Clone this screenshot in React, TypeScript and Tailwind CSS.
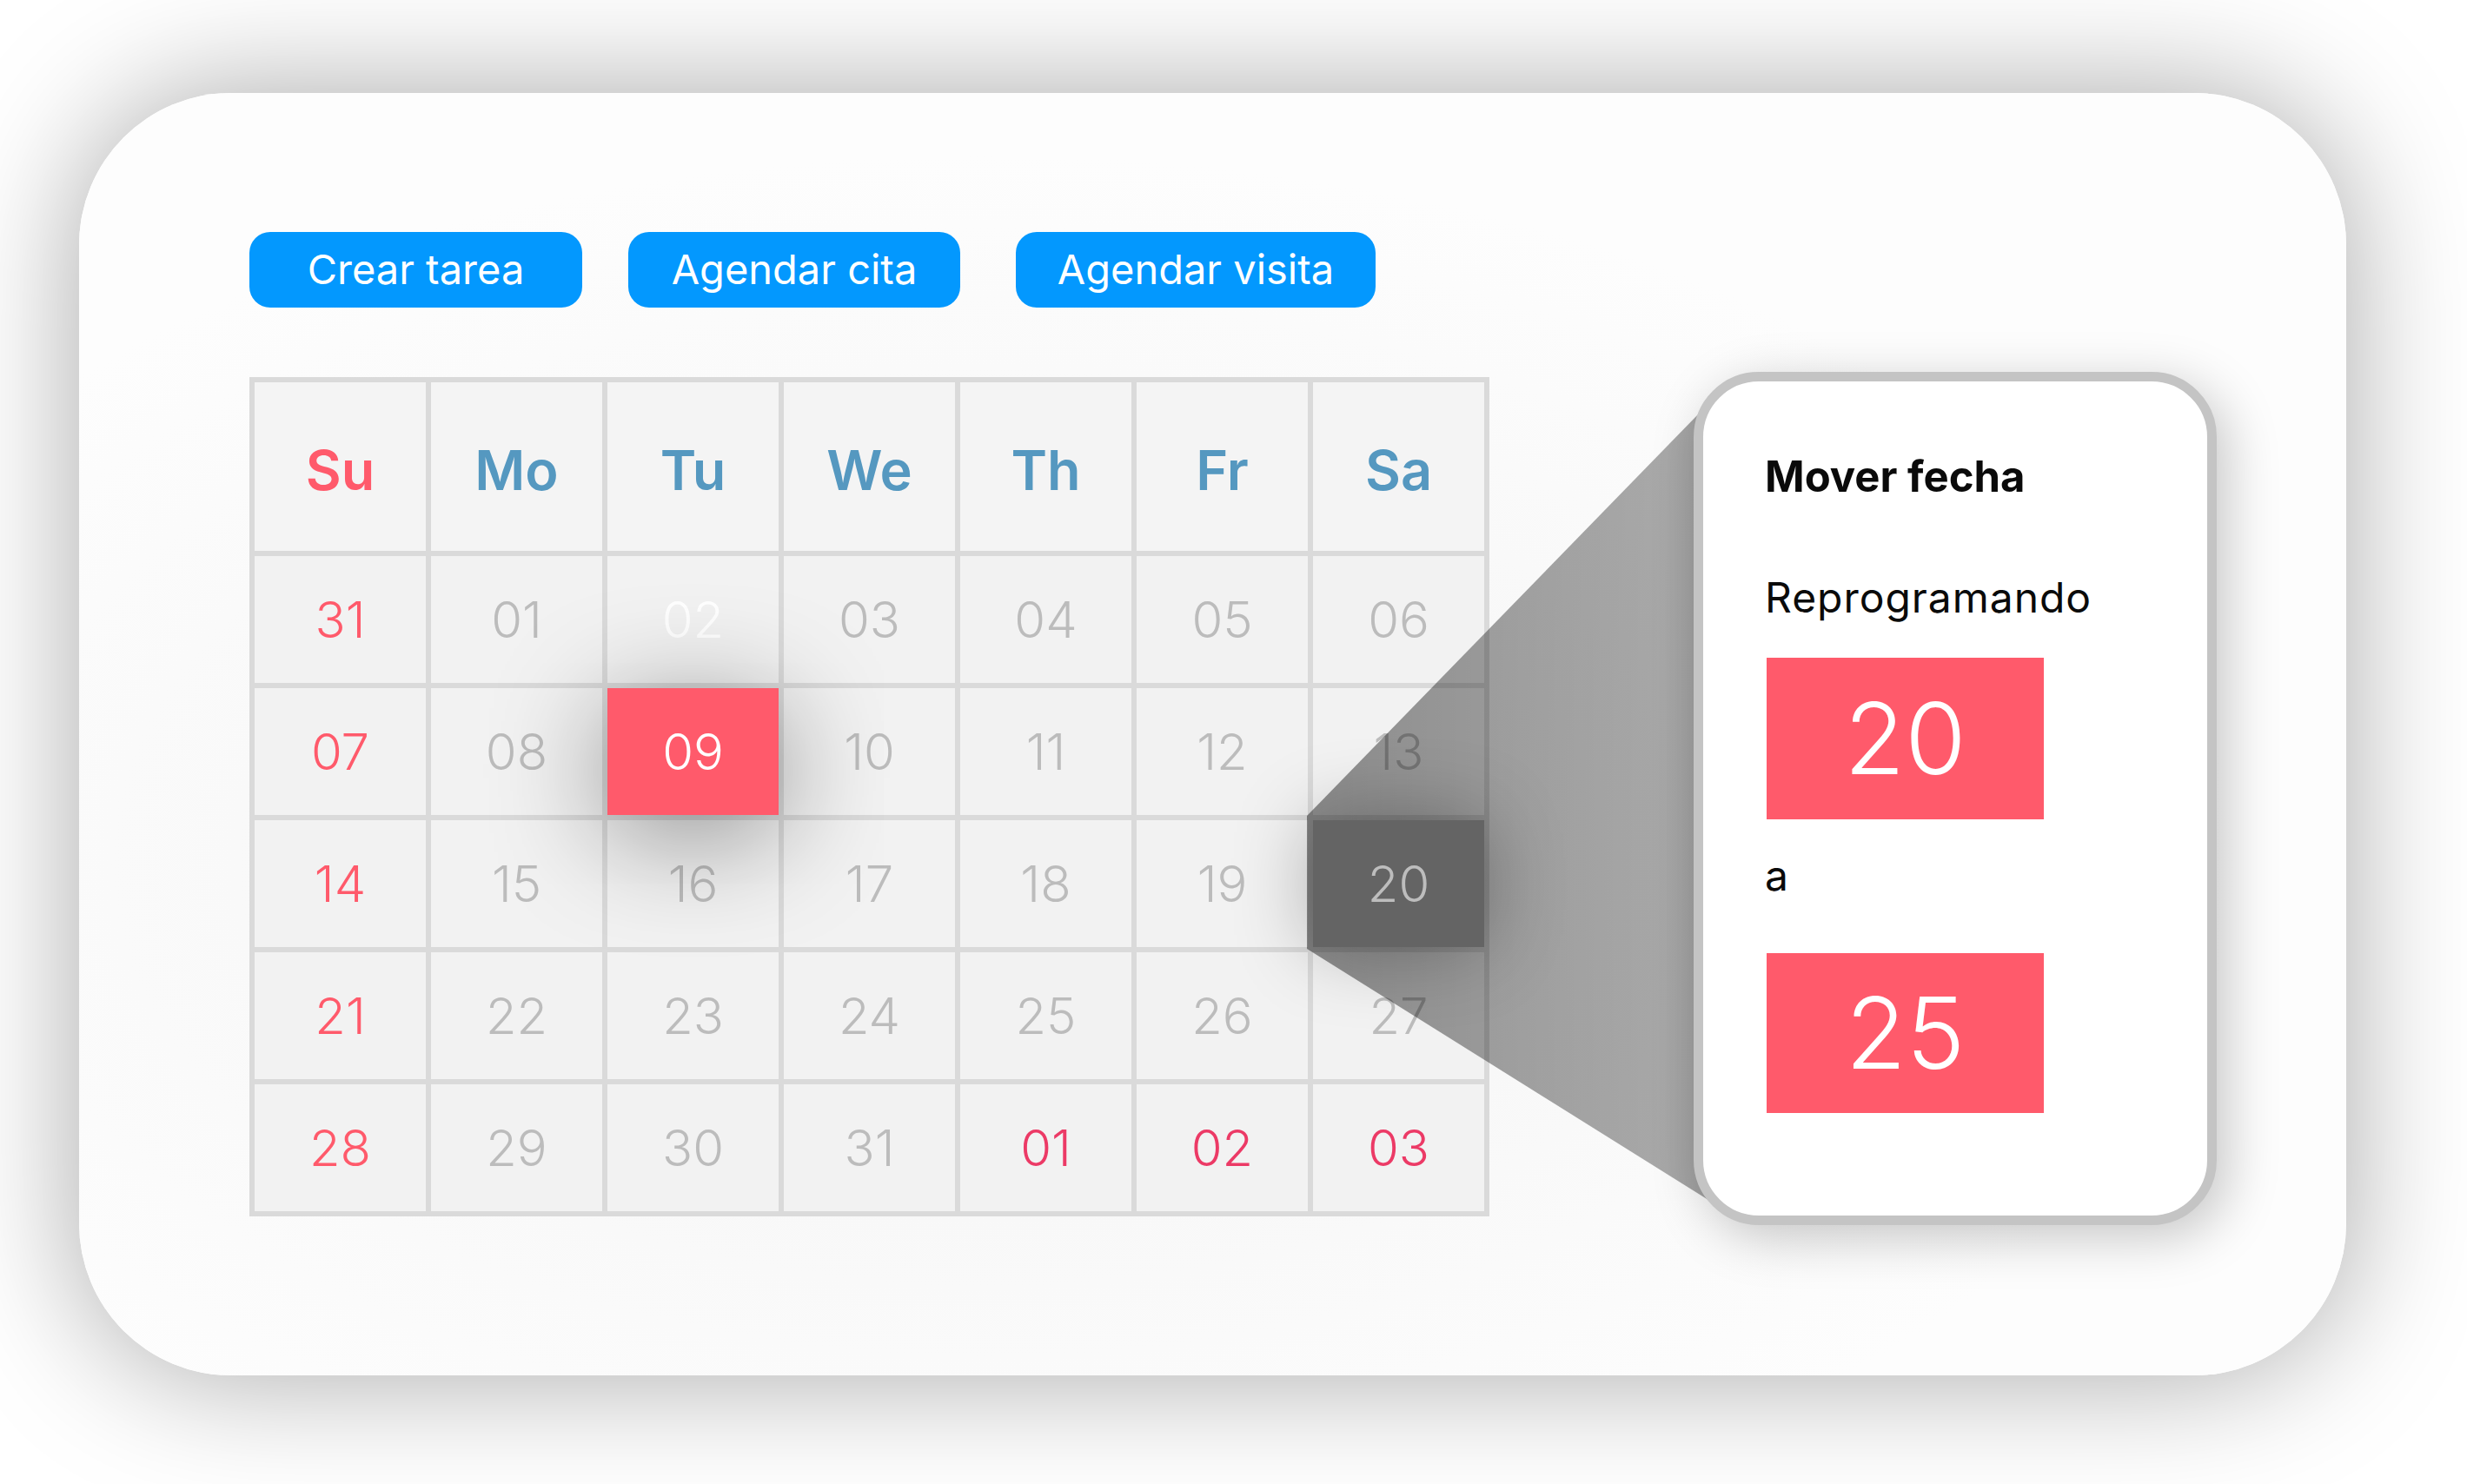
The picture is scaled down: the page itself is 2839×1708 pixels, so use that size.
import React from "react";

type TDay = {
  label: string;
  tone: "red" | "grey" | "pink" | "white" | "picked" | "target";
};

const weekDays = ["Su", "Mo", "Tu", "We", "Th", "Fr", "Sa"];

const g = (label: string): TDay => ({ label, tone: "grey" });
const r = (label: string): TDay => ({ label, tone: "red" });
const p = (label: string): TDay => ({ label, tone: "pink" });

const days: TDay[] = [
  r("31"), g("01"), { label: "02", tone: "white" }, g("03"), g("04"), g("05"), g("06"),
  r("07"), g("08"), { label: "09", tone: "picked" }, g("10"), g("11"), g("12"), g("13"),
  r("14"), g("15"), g("16"), g("17"), g("18"), g("19"), { label: "20", tone: "target" },
  r("21"), g("22"), g("23"), g("24"), g("25"), g("26"), g("27"),
  r("28"), g("29"), g("30"), g("31"), p("01"), p("02"), p("03"),
];

function DayCell({ day }: { day: TDay }) {
  // cada tono tiene su fondo y color de texto
  if (day.tone === "picked") {
    return (
      <div className="relative z-[5] flex h-[146px] items-center justify-center bg-[#ff5a6b] text-[58px] font-light text-white shadow-[0_22px_130px_rgba(0,0,0,0.42)]">
        {day.label}
      </div>
    );
  }
  if (day.tone === "target") {
    return (
      <div className="relative z-20 flex h-[146px] items-center justify-center bg-[#646464] text-[58px] font-light text-[#bdbdbd] shadow-[0_0_90px_rgba(0,0,0,0.3)]">
        {day.label}
      </div>
    );
  }
  const color =
    day.tone === "red"
      ? "text-[#ff5a6b]"
      : day.tone === "pink"
      ? "text-[#ec3a66]"
      : day.tone === "white"
      ? "text-white"
      : "text-[#bcbcbc]";
  return (
    <div className={`flex h-[146px] items-center justify-center bg-[#f2f2f2] text-[58px] font-light ${color}`}>
      {day.label}
    </div>
  );
}

function Calendar() {
  return (
    <div className="grid grid-cols-[repeat(7,197px)] gap-[6px] bg-[#dadada] p-[6px]">
      {weekDays.map((name, index) => (
        <div
          key={name}
          className={`flex h-[194px] items-center justify-center bg-[#f4f4f4] pt-[8px] text-[63px] font-semibold ${
            index === 0 ? "text-[#ff5a6b]" : "text-[#5598c0]"
          }`}
        >
          {name}
        </div>
      ))}
      {days.map((day, index) => (
        <DayCell key={index} day={day} />
      ))}
    </div>
  );
}

function MoveDatePanel() {
  return (
    <div className="relative z-30 -mt-[6px] ml-[235px] flex h-[982px] w-[602px] flex-col rounded-[75px] border-[11px] border-[#c4c4c4] bg-white pl-[71px] shadow-[12px_14px_60px_rgba(0,0,0,0.22)]">
      <div className="mt-[85px] text-[49px] font-bold leading-none text-[#0a0a0a]">Mover fecha</div>
      <div className="mt-[91px] text-[48px] leading-none tracking-[0.02em] text-[#0a0a0a]">Reprogramando</div>
      <div className="ml-[2px] mt-[45px] flex h-[186px] w-[319px] items-center justify-center bg-[#ff5a6b] text-[114px] font-light leading-none text-white">
        20
      </div>
      <div className="mt-[41px] text-[48px] leading-none text-[#0a0a0a]">a</div>
      <div className="ml-[2px] mt-[65px] flex h-[184px] w-[319px] items-center justify-center bg-[#ff5a6b] text-[114px] font-light leading-none text-white">
        25
      </div>
    </div>
  );
}

export default function App() {
  const buttons = [
    { name: "Crear tarea", width: "w-[383px]" },
    { name: "Agendar cita", width: "w-[382px] ml-[53px]" },
    { name: "Agendar visita", width: "w-[414px] ml-[64px]" },
  ];

  return (
    <div className="h-[1708px] w-[2839px] overflow-hidden bg-white pl-[91px] pt-[107px] font-[Inter,'Liberation_Sans',sans-serif]">
      <div className="relative h-[1476px] w-[2609px] rounded-[175px] bg-[radial-gradient(ellipse_at_40%_60%,#f3f3f3_0%,#fdfdfd_65%)] pl-[196px] pt-[160px] shadow-[0_0_150px_rgba(0,0,0,0.35)]">
        {/* botones */}
        <div className="flex">
          {buttons.map((item) => (
            <div
              key={item.name}
              className={`flex h-[87px] items-center justify-center rounded-[24px] bg-[#0398fe] text-[47px] text-white ${item.width}`}
            >
              {item.name}
            </div>
          ))}
        </div>

        {/* calendario + panel */}
        <div className="mt-[80px] flex items-start">
          <Calendar />
          <MoveDatePanel />
        </div>

        {/* proyeccion del zoom */}
        <svg className="pointer-events-none absolute left-0 top-0 z-10" width="2609" height="1476">
          <defs>
            <linearGradient id="zoomFill" x1="1413" y1="0" x2="1960" y2="0" gradientUnits="userSpaceOnUse">
              <stop offset="0" stopColor="#000" stopOpacity="0.42" />
              <stop offset="0.45" stopColor="#000" stopOpacity="0.36" />
              <stop offset="0.75" stopColor="#000" stopOpacity="0.33" />
              <stop offset="1" stopColor="#000" stopOpacity="0.42" />
            </linearGradient>
          </defs>
          <polygon
            points="1413,832 1865,368 1960,368 1960,1291 1902,1291 1413,985"
            fill="url(#zoomFill)"
          />
        </svg>
      </div>
    </div>
  );
}
